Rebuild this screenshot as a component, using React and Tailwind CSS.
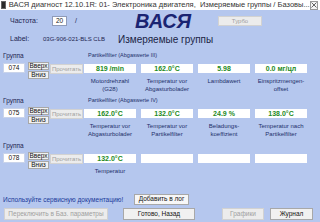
import React from 'react';

const groups = [
    {
        code: '074',
        header: 'Partikelfilter (Abgaswerte III)',
        cells: [
            { value: '819 /min', desc: ['Motordrehzahl', '(G28)'] },
            { value: '162.0°C', desc: ['Temperatur vor', 'Abgasturbolader'] },
            { value: '5.98', desc: ['Lambdawert'] },
            { value: '0.0 мг/цл', desc: ['Einspritzmengen-', 'offset'] },
        ],
    },
    {
        code: '075',
        header: 'Partikelfilter (Abgaswerte IV)',
        cells: [
            { value: '162.0°C', desc: ['Temperatur vor', 'Abgasturbolader'] },
            { value: '132.0°C', desc: ['Temperatur vor', 'Partikelfilter'] },
            { value: '24.9 %', desc: ['Beladungs-', 'koeffizient'] },
            { value: '138.0°C', desc: ['Temperatur nach', 'Partikelfilter'] },
        ],
    },
    {
        code: '078',
        header: '',
        cells: [
            { value: '132.0°C', desc: ['Temperatur'] },
            { value: '', desc: [] },
            { value: '', desc: [] },
            { value: '', desc: [] },
        ],
    },
];

const Btn = ({ children, disabled, className = '' }) => (
    <div
        className={`flex items-center justify-center border leading-none whitespace-nowrap ${
            disabled
                ? 'bg-[#ececec] border-[#d2d2d2] text-[#a0a0a0]'
                : 'bg-[#f1f1f1] border-[#a8a8a8] text-[#111]'
        } ${className}`}
    >
        {children}
    </div>
);

const Group = ({ group }) => (
    <div className="h-[45px] flex flex-col">
        {/* group header */}
        <div className="h-[9px] flex items-center text-[#1c2550]">
            <span className="w-[85px] pl-[3px] text-[6.5px]">Группа</span>
            <span className="pl-[3px] text-[5.5px] text-[#22306a]">{group.header}</span>
        </div>
        <div className="mt-[2px] flex items-start pl-[3px]">
            <div className="mt-[1px] w-[22px] h-[10px] bg-white border border-[#c9d3ea] flex items-center justify-center text-[6.5px] text-[#111]">
                {group.code}
            </div>
            <div className="ml-[3px] w-[21px] flex flex-col gap-[1px]">
                <Btn className="h-[8px] text-[6.5px]">Вверх</Btn>
                <Btn className="h-[8px] text-[6.5px]">Вниз</Btn>
            </div>
            <Btn disabled className="ml-[1px] mt-[2px] w-[33px] h-[10px] text-[6px]">Прочитать</Btn>
            <div className="ml-[1px] flex gap-[5px]">
                {group.cells.map((c, i) => (
                    <div key={i} className="w-[52px] flex flex-col items-center">
                        <div className="mt-[2px] w-full h-[9px] bg-white flex items-center justify-center text-[7px] font-bold text-[#238a23] leading-none">
                            {c.value}
                        </div>
                        <div className="mt-[4px] text-center text-[6px] leading-[8px] text-[#22306a] whitespace-nowrap">
                            {c.desc.map((d, j) => (
                                <div key={j}>{d}</div>
                            ))}
                        </div>
                    </div>
                ))}
            </div>
        </div>
    </div>
);

const App = () => {
    return (
        <div
            className="w-[320px] h-[222px] overflow-hidden flex flex-col bg-[#b5c7ee]"
            style={{ fontFamily: '"Liberation Sans", Arial, sans-serif' }}
        >
            {/* Title bar */}
            <div className="h-[10px] bg-white flex items-center pl-[1px] pr-[2px]">
                <div className="w-[7px] h-[8px] bg-[#2a2a2a] border border-[#666]"></div>
                <span className="ml-[3px] text-[7.5px] text-[#333] whitespace-nowrap leading-none">
                    ВАСЯ диагност 12.10.1R: 01- Электроника двигателя,&nbsp; Измеряемые группы / Базовы...
                </span>
                <div className="ml-auto w-[13px] h-[9px] border border-[#9a9a9a] bg-[#f4f4f4] flex items-center justify-center">
                    <svg width="6" height="6" viewBox="0 0 6 6">
                        <path d="M0.5 0.5L5.5 5.5M5.5 0.5L0.5 5.5" stroke="#555" strokeWidth="0.9" />
                    </svg>
                </div>
            </div>

            {/* Header */}
            <div className="h-[22px] flex items-center pl-[10px]">
                <span className="w-[42px] text-[7px] text-[#1c2550]">Частота:</span>
                <div className="w-[15px] h-[10px] bg-white border border-[#8f9bb8] flex items-center justify-center text-[6.5px] text-[#222]">20</div>
                <span className="ml-[8px] w-[60px] text-[7px] text-[#1c2550]">/</span>
                <span className="w-[83px] text-[20px] font-bold italic text-[#1a2472] leading-none">ВАСЯ</span>
                <Btn disabled className="w-[44px] h-[10px] text-[6px] bg-[#e6e8ee]">Турбо</Btn>
            </div>
            <div className="h-[14px] flex items-center pl-[10px]">
                <span className="w-[33px] text-[7px] text-[#1c2550]">Label:</span>
                <span className="w-[75px] text-[6px] text-[#1c2550] whitespace-nowrap">03G-906-021-BLS CLB</span>
                <span className="text-[10px] text-[#1a1f45] whitespace-nowrap">Измеряемые группы</span>
            </div>

            {/* Groups */}
            <div className="mt-[5px] flex flex-col">
                {groups.map(g => (
                    <Group key={g.code} group={g} />
                ))}
            </div>

            {/* Footer */}
            <div className="mt-[8px] h-[11px] flex items-center pl-[3px]">
                <span className="w-[131px] text-[6.5px] text-[#1a3a9a] whitespace-nowrap">Используйте сервисную документацию!</span>
                <Btn className="w-[55px] h-[11px] text-[6.5px] bg-[#f7f7f7]">Добавить в лог</Btn>
            </div>
            <div className="mt-[3px] h-[12px] flex items-center pl-[4px]">
                <Btn disabled className="w-[104px] h-[12px] text-[6.5px]">Переключить в Баз. параметры</Btn>
                <Btn className="ml-[15px] w-[72px] h-[12px] text-[6.5px]">Готово, Назад</Btn>
                <Btn disabled className="ml-[27px] w-[42px] h-[12px] text-[6.5px]">Графики</Btn>
                <Btn className="ml-[6px] w-[43px] h-[12px] text-[6.5px]">Журнал</Btn>
            </div>
        </div>
    );
};

export default App;
